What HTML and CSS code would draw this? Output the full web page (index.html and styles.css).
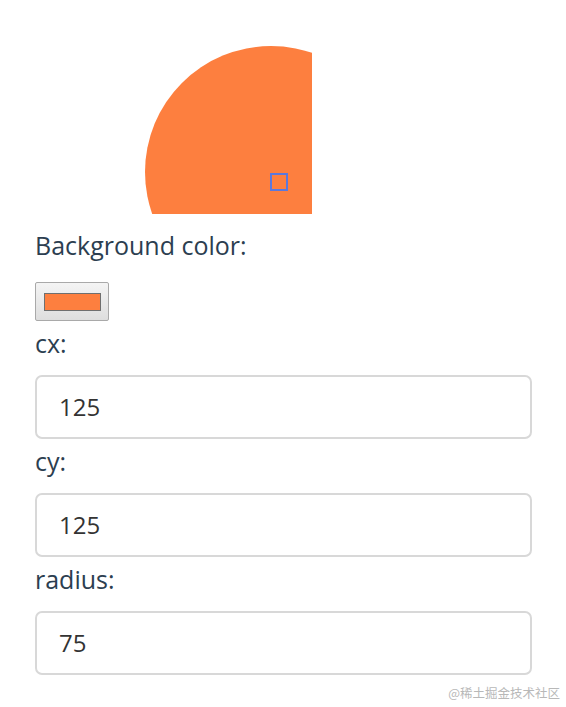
FILE: index.html
```html
<!DOCTYPE html>
<html lang="en">
<head>
<meta charset="utf-8">
<title>Circle</title>
<link rel="stylesheet" href="styles.css">
</head>
<body>
<div class="app">
  <svg class="stage" width="167" height="169" viewBox="0 0 167 169">
    <circle cx="126" cy="127" r="126" fill="#fd7f3f"/>
    <rect x="126" y="129" width="16" height="16" fill="none" stroke="#5c78dc" stroke-width="2"/>
  </svg>
  <div class="label first">Background color:</div>
  <div class="color-picker"><span class="swatch"></span></div>
  <div class="label">cx:</div>
  <div class="field">125</div>
  <div class="label">cy:</div>
  <div class="field">125</div>
  <div class="label">radius:</div>
  <div class="field">75</div>
</div>
<div class="watermark">@稀土掘金技术社区</div>
</body>
</html>
```
FILE: styles.css
```css
html, body {
  margin: 0;
  padding: 0;
  background: #ffffff;
}
body {
  width: 566px;
  height: 707px;
  position: relative;
  overflow: hidden;
  font-family: "Open Sans", "Noto Sans", sans-serif;
  color: #2c3e50;
}
.app {
  padding: 45px 34px 0 35px;
  display: flex;
  flex-direction: column;
  align-items: flex-start;
}
.stage {
  display: block;
  margin-left: 110px;
}
.label {
  font-size: 25px;
  line-height: 44px;
  height: 44px;
  margin-bottom: 10px;
  white-space: nowrap;
}
.label.first {
  margin-top: 9px;
  margin-bottom: 15px;
}
.color-picker {
  box-sizing: border-box;
  width: 74px;
  height: 39px;
  border: 1px solid #a9a9a9;
  border-radius: 2px;
  background: linear-gradient(#f4f4f4, #dedede);
  display: flex;
  align-items: center;
  justify-content: center;
}
.swatch {
  display: block;
  box-sizing: border-box;
  width: 57px;
  height: 18px;
  background: #fd7f3f;
  border: 1px solid #6f6f6f;
}
.field {
  box-sizing: border-box;
  align-self: stretch;
  height: 64px;
  border: 2px solid #d8d8d8;
  border-radius: 7px;
  padding-left: 22px;
  font-size: 24px;
  line-height: 60px;
  color: #333333;
}
.watermark {
  position: absolute;
  right: 6px;
  bottom: 5px;
  font-family: "Noto Sans CJK SC", sans-serif;
  font-size: 12.5px;
  color: #b8b8b8;
}
```
